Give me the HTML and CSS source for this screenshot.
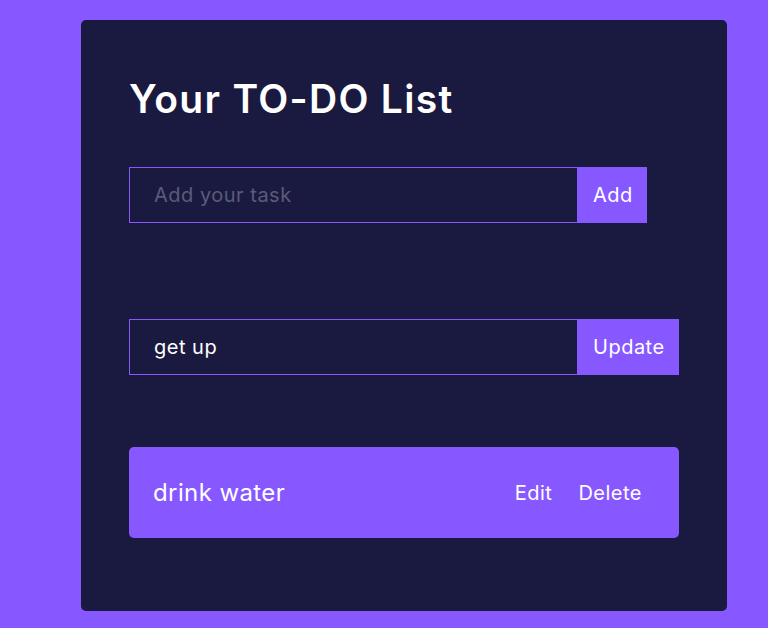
FILE: index.html
```html
<!DOCTYPE html>
<html lang="en">
<head>
<meta charset="utf-8">
<title>Your TO-DO List</title>
<link rel="stylesheet" href="styles.css">
</head>
<body>
<div class="page">
  <div class="card">
    <h1 class="title">Your TO-DO List</h1>
    <form class="todo-form">
      <input class="todo-input" type="text" placeholder="Add your task">
      <button class="todo-btn" type="button">Add</button>
    </form>
    <form class="todo-form edit-form">
      <input class="todo-input" type="text" value="get up">
      <button class="todo-btn" type="button">Update</button>
    </form>
    <div class="todo-item">
      <span class="todo-text">drink water</span>
      <div class="todo-actions">
        <span class="action">Edit</span>
        <span class="action">Delete</span>
      </div>
    </div>
  </div>
</div>
</body>
</html>
```
FILE: styles.css
```css
* { box-sizing: border-box; }
html, body {
  margin: 0;
  padding: 0;
  background: #8758ff;
  font-family: Inter, "Open Sans", sans-serif;
}
.page {
  padding: 20px 41px 17px 81px;
}
.card {
  background: #1a1a40;
  border-radius: 5px;
  padding: 55px 48px 73px 48px;
  height: 591px;
}
.title {
  margin: 0 0 44px 0;
  font-size: 39px;
  line-height: 48px;
  font-weight: 600;
  color: #fff;
  letter-spacing: 1.3px;
}
.todo-form {
  display: flex;
  height: 56px;
  margin: 0;
}
.edit-form {
  margin-top: 96px;
}
.todo-input {
  width: 449px;
  height: 56px;
  border: 1px solid #8758ff;
  background: transparent;
  color: #fff;
  padding: 0 24px;
  font-family: inherit;
  font-size: 20px;
  letter-spacing: 0.5px;
  outline: none;
}
.todo-input::placeholder {
  color: #5c5a7a;
}
.todo-btn {
  background: #8758ff;
  color: #fff;
  border: none;
  height: 56px;
  padding: 0 14px 0 15px;
  font-family: inherit;
  font-size: 20px;
  letter-spacing: 0.5px;
}
.todo-item {
  margin-top: 72px;
  height: 91px;
  background: #8758ff;
  border-radius: 5px;
  display: flex;
  align-items: center;
  justify-content: space-between;
  padding: 0 37px 0 24px;
  color: #fff;
}
.todo-text {
  font-size: 24px;
  letter-spacing: 0.4px;
}
.todo-actions {
  display: flex;
  gap: 26px;
  font-size: 20px;
  letter-spacing: 0.5px;
}
```
